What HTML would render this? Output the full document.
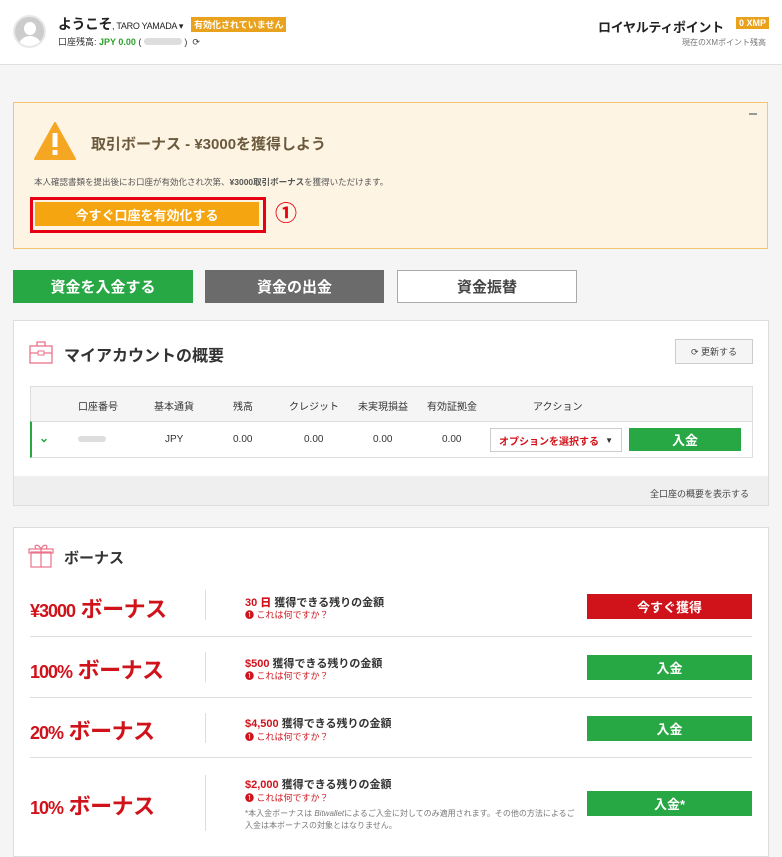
<!DOCTYPE html>
<html><head><meta charset="utf-8"><style>
*{margin:0;padding:0;box-sizing:border-box}
body{width:782px;height:849px;overflow:hidden;background:#f5f5f5;font-family:"Liberation Sans","Noto Sans CJK JP",sans-serif;position:relative;color:#333}
.a{position:absolute}
.btn{position:absolute;display:flex;align-items:center;justify-content:center;font-weight:bold;color:#fff}
.th{position:absolute;top:398px;font-size:10px;color:#333;text-align:center}
.td{position:absolute;top:434px;font-size:10px;color:#333;text-align:center}
.bt{position:absolute;left:30px;font-size:22px;font-weight:bold;color:#d0121b;letter-spacing:-0.5px}
.bt small{font-size:18px;letter-spacing:-1px}
.vl{position:absolute;left:205px;width:1px;background:#ddd}
.hl{position:absolute;left:30px;width:722px;height:1px;background:#ddd}
.amt{position:absolute;left:245px;font-size:11px;font-weight:bold;color:#333}
.amt b{color:#d0121b}
.what{position:absolute;left:245px;font-size:9px;color:#d0121b}
</style></head><body>
<div class="a" style="left:0;top:0;width:782px;height:65px;background:#fff;border-bottom:1px solid #e0e0e0"></div>
<div class="a" style="left:13px;top:15px;width:33px;height:33px;border-radius:50%;background:#ccc;border:2px solid #e8e8e8;overflow:hidden">
<div class="a" style="left:9px;top:5px;width:12px;height:13px;border-radius:50%;background:#fff"></div>
<div class="a" style="left:3px;top:19px;width:24px;height:16px;border-radius:12px 12px 0 0;background:#fff"></div></div>
<div class="a" style="left:58px;top:14px;font-size:14px;color:#222;font-weight:bold;white-space:nowrap;letter-spacing:-0.5px">ようこそ<span style="font-size:9px;font-weight:normal;letter-spacing:-0.3px">, TARO YAMADA ▾</span></div>
<div class="a" style="left:191px;top:17px;background:#e8a21e;color:#fff;font-size:9px;font-weight:bold;padding:1px 3px;white-space:nowrap">有効化されていません</div>
<div class="a" style="left:58px;top:35px;font-size:9px;color:#333">口座残高: <b style="color:#2ca02c">JPY 0.00</b> ( <span style="display:inline-block;width:38px;height:7px;background:#ddd;border-radius:4px"></span> ) &nbsp;⟳</div>
<div class="a" style="left:598px;top:17px;font-size:13px;font-weight:bold;color:#222;white-space:nowrap;letter-spacing:-0.3px">ロイヤルティポイント</div>
<div class="a" style="left:736px;top:17px;background:#e8a21e;color:#fff;font-size:9px;font-weight:bold;padding:1px 3px;white-space:nowrap">0 XMP</div>
<div class="a" style="left:682px;top:37px;font-size:8px;color:#777">現在のXMポイント残高</div>

<div class="a" style="left:13px;top:102px;width:755px;height:147px;background:#fdf4e3;border:1px solid #f5c46e"></div>
<div class="a" style="left:749px;top:113px;width:8px;height:2px;background:#999"></div>
<svg class="a" style="left:34px;top:122px" width="42" height="38"><polygon points="21,1 41,37 1,37" fill="#f5a623" stroke="#f5a623" stroke-linejoin="round" stroke-width="2"/><rect x="18.5" y="11" width="5" height="14" fill="#fff"/><rect x="18.5" y="28" width="5" height="5" fill="#fff"/></svg>
<div class="a" style="left:91px;top:133px;font-size:15px;font-weight:bold;color:#6b5a3e">取引ボーナス - ¥3000を獲得しよう</div>
<div class="a" style="left:34px;top:176px;font-size:8.5px;color:#555">本人確認書類を提出後にお口座が有効化され次第、<b>¥3000取引ボーナス</b>を獲得いただけます。</div>
<div class="a" style="left:30px;top:197px;width:236px;height:36px;border:3px solid #e60012"></div>
<div class="btn" style="left:35px;top:202px;width:224px;height:24px;background:#f5a50f;font-size:13px">今すぐ口座を有効化する</div>
<div class="a" style="left:275px;top:202px;font-size:22px;color:#e60012;font-weight:bold;line-height:24px">①</div>

<div class="btn" style="left:13px;top:270px;width:180px;height:33px;background:#28a745;font-size:15px">資金を入金する</div>
<div class="btn" style="left:205px;top:270px;width:179px;height:33px;background:#6b6b6b;font-size:15px">資金の出金</div>
<div class="btn" style="left:397px;top:270px;width:180px;height:33px;background:#fff;border:1px solid #aaa;color:#444;font-size:15px">資金振替</div>

<div class="a" style="left:13px;top:320px;width:756px;height:186px;background:#fff;border:1px solid #ddd"></div>
<div class="a" style="left:14px;top:476px;width:754px;height:29px;background:#efefef"></div>
<div class="a" style="left:650px;top:487px;font-size:9px;color:#444">全口座の概要を表示する</div>
<svg class="a" style="left:28px;top:339px" width="26" height="26"><rect x="2" y="7" width="22" height="17" fill="none" stroke="#e9738a" stroke-width="1.3"/><path d="M9 7V3h8v4M2 14h22" fill="none" stroke="#e9738a" stroke-width="1.3"/><rect x="10" y="12" width="6" height="4" fill="#fff" stroke="#e9738a"/></svg>
<div class="a" style="left:64px;top:342px;font-size:16px;font-weight:bold;color:#333">マイアカウントの概要</div>
<div class="btn" style="left:675px;top:339px;width:78px;height:25px;background:#f5f5f5;border:1px solid #ccc;color:#444;font-size:9px;font-weight:normal">⟳ 更新する</div>
<div class="a" style="left:30px;top:386px;width:723px;height:36px;background:#f5f5f5;border:1px solid #ddd"></div>
<div class="a" style="left:30px;top:421px;width:723px;height:37px;background:#fff;border:1px solid #ddd;border-left:2px solid #28a745"></div>
<div class="th" style="left:78px">口座番号</div><div class="th" style="left:154px">基本通貨</div><div class="th" style="left:233px">残高</div><div class="th" style="left:289px">クレジット</div><div class="th" style="left:358px">未実現損益</div><div class="th" style="left:427px">有効証拠金</div><div class="th" style="left:533px">アクション</div>
<div class="td" style="left:39px;color:#28a745;font-weight:bold;font-size:12px;top:431px">⌄</div>
<div class="a" style="left:78px;top:436px;width:28px;height:6px;background:#ddd;border-radius:3px"></div>
<div class="td" style="left:165px">JPY</div><div class="td" style="left:233px">0.00</div><div class="td" style="left:304px">0.00</div><div class="td" style="left:373px">0.00</div><div class="td" style="left:442px">0.00</div>
<div class="a" style="left:490px;top:428px;width:132px;height:24px;border:1px solid #ccc;background:#fff;font-size:10px;color:#d0121b;font-weight:bold;padding:0 8px;display:flex;align-items:center;justify-content:space-between">オプションを選択する <span style="color:#333;font-size:8px">▼</span></div>
<div class="btn" style="left:629px;top:428px;width:112px;height:23px;background:#28a745;font-size:13px">入金</div>

<div class="a" style="left:13px;top:527px;width:756px;height:330px;background:#fff;border:1px solid #ddd"></div>
<svg class="a" style="left:28px;top:543px" width="26" height="26"><rect x="3" y="9" width="20" height="15" fill="none" stroke="#e9738a" stroke-width="1.2"/><rect x="1" y="6" width="24" height="4" fill="none" stroke="#e9738a" stroke-width="1.2"/><path d="M13 6v18M13 6c-3-6-8-4-5 0M13 6c3-6 8-4 5 0" fill="none" stroke="#e9738a" stroke-width="1.2"/></svg>
<div class="a" style="left:64px;top:547px;font-size:15px;font-weight:bold;color:#333">ボーナス</div>

<div class="bt" style="top:592px"><small>¥3000</small> ボーナス</div>
<div class="vl" style="top:590px;height:30px"></div>
<div class="amt" style="top:594px"><b>30 日</b> 獲得できる残りの金額</div>
<div class="what" style="top:608px">❶ これは何ですか？</div>
<div class="btn" style="left:587px;top:594px;width:165px;height:25px;background:#d0121b;font-size:13px">今すぐ獲得</div>
<div class="hl" style="top:636px"></div>

<div class="bt" style="top:653px"><small>100%</small> ボーナス</div>
<div class="vl" style="top:652px;height:30px"></div>
<div class="amt" style="top:655px"><b>$500</b> 獲得できる残りの金額</div>
<div class="what" style="top:669px">❶ これは何ですか？</div>
<div class="btn" style="left:587px;top:655px;width:165px;height:25px;background:#28a745;font-size:13px">入金</div>
<div class="hl" style="top:697px"></div>

<div class="bt" style="top:714px"><small>20%</small> ボーナス</div>
<div class="vl" style="top:713px;height:30px"></div>
<div class="amt" style="top:715px"><b>$4,500</b> 獲得できる残りの金額</div>
<div class="what" style="top:730px">❶ これは何ですか？</div>
<div class="btn" style="left:587px;top:716px;width:165px;height:25px;background:#28a745;font-size:13px">入金</div>
<div class="hl" style="top:757px"></div>

<div class="bt" style="top:789px"><small>10%</small> ボーナス</div>
<div class="vl" style="top:775px;height:56px"></div>
<div class="amt" style="top:776px"><b>$2,000</b> 獲得できる残りの金額</div>
<div class="what" style="top:791px">❶ これは何ですか？</div>
<div class="a" style="left:245px;top:808px;font-size:8px;color:#777;width:330px;line-height:12px">*本入金ボーナスは <i>Bitwallet</i>によるご入金に対してのみ適用されます。その他の方法によるご入金は本ボーナスの対象とはなりません。</div>
<div class="btn" style="left:587px;top:791px;width:165px;height:25px;background:#28a745;font-size:13px">入金*</div>
</body></html>
